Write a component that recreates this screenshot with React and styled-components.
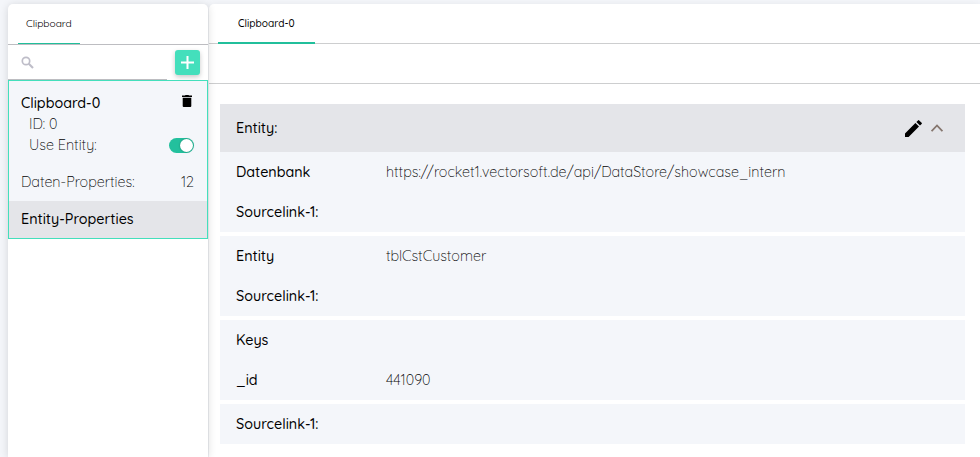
import React from 'react';
import styled, { createGlobalStyle } from 'styled-components';

const GlobalStyle = createGlobalStyle`
  *, *::before, *::after { box-sizing: border-box; }
  body {
    margin: 0;
    background: #f4f6fa;
    font-family: Quicksand, Lato, sans-serif;
    font-size: 14.4px;
    color: #000;
    overflow: hidden;
  }
`;

const Page = styled.div`
  display: flex;
  gap: 1px;
  height: 457px;
  padding: 4px 0 0 8px;
`;

const Panel = styled.section`
  display: flex;
  flex-direction: column;
  background: #fff;
  border-radius: 5px 5px 0 0;
`;

const Sidebar = styled(Panel)`
  flex: 0 0 200px;
  position: relative;
  z-index: 1;
  box-shadow: 0 1px 8px rgba(0, 0, 0, 0.14);
`;

const Main = styled(Panel)`
  flex: 1;
  min-width: 0;
  border-top-right-radius: 0;
  box-shadow: 0 1px 8px rgba(0, 0, 0, 0.08);
`;

const Text = styled.span`
  font-size: ${(p) => (p.$strong ? 14.3 : 14.35)}px;
  font-weight: ${(p) => (p.$strong ? 500 : 300)};
  color: #000;
  line-height: 20px;
  white-space: nowrap;
`;

const TabLabel = styled.span`
  display: block;
  font-size: 10.2px;
  font-weight: ${(p) => (p.$active ? 500 : 400)};
  line-height: 20px;
  color: #000;
  white-space: nowrap;
`;

const SidebarTabs = styled.nav`
  display: flex;
  height: 41px;
  padding-left: 10px;
  border-bottom: 1px solid #bdbdc1;
`;

const SidebarTab = styled.div`
  width: 62px;
  height: 40px;
  padding: 10px 8px 0;
  border-bottom: 1px solid #21bf9b;
`;

const SearchRow = styled.div`
  display: flex;
  height: 35px;
`;

const SearchField = styled.div`
  display: flex;
  align-items: center;
  width: 159px;
  padding-left: 13px;
  border-bottom: 1px solid #bdbdc1;
`;

const AddButton = styled.button`
  display: grid;
  place-items: center;
  width: 25px;
  height: 25px;
  margin: 5px 0 0 8px;
  padding: 0;
  border: 0;
  border-radius: 3px;
  background: #44dfbc;
  box-shadow: 0 2px 5px rgba(0, 0, 0, 0.22);
`;

const Card = styled.article`
  height: 159px;
  border: 1px solid #44dfbc;
  background: #f4f6fa;
`;

const CardBody = styled.div`
  display: flex;
  flex-direction: column;
  height: 120px;
  padding: 11px 13px 0 12px;
`;

const CardRow = styled.div`
  display: flex;
  align-items: center;
  justify-content: space-between;
  height: 21px;
  padding-left: ${(p) => (p.$indent ? 8 : 0)}px;
  margin-top: ${(p) => p.$gap || 0}px;
`;

const TrashIcon = styled.svg`
  margin: -3px 2px 0 0;
`;

const Switch = styled.span`
  display: flex;
  justify-content: flex-end;
  width: 25px;
  height: 15px;
  margin-top: 2px;
  padding: 1px;
  border-radius: 8px;
  background: #23c09d;
`;

const Knob = styled.span`
  width: 13px;
  height: 13px;
  border-radius: 50%;
  background: #fff;
  box-shadow: 0 0 2px rgba(0, 0, 0, 0.35);
`;

const CardFooter = styled.div`
  display: flex;
  align-items: center;
  height: 37px;
  padding: 0 12px 2px;
  background: #e4e5e9;
`;

const MainTabs = styled.nav`
  display: flex;
  height: 40px;
  padding-left: 9px;
  border-bottom: 1px solid #cdcecf;
`;

const MainTab = styled.div`
  width: 97px;
  height: 40px;
  padding: 10px 20px 0;
  border-bottom: 2px solid #21bf9b;
`;

const Toolbar = styled.div`
  height: 40px;
  border-bottom: 1px solid #cdcecf;
`;

const Content = styled.div`
  display: flex;
  flex-direction: column;
  gap: 4px;
  padding: 20px 15px 0 11px;
`;

const Group = styled.div`
  background: #f4f6fa;
`;

const GroupHeader = styled.header`
  display: flex;
  align-items: center;
  height: 48px;
  padding: 0 22px 0 16px;
  background: #e4e5e9;
`;

const HeaderActions = styled.div`
  display: flex;
  align-items: center;
  gap: 9px;
  margin-left: auto;
`;

const Property = styled.div`
  display: grid;
  grid-template-columns: 150px 1fr;
  align-items: center;
  height: 40px;
  padding: 0 16px;
`;

const groups = [
  {
    header: true,
    rows: [
      { label: 'Datenbank', value: 'https://rocket1.vectorsoft.de/api/DataStore/showcase_intern' },
      { label: 'Sourcelink-1:' },
    ],
  },
  { rows: [{ label: 'Entity', value: 'tblCstCustomer' }, { label: 'Sourcelink-1:' }] },
  { rows: [{ label: 'Keys' }, { label: '_id', value: '441090' }] },
  { rows: [{ label: 'Sourcelink-1:' }] },
];

export default function App() {
  return (
    <>
      <GlobalStyle />
      <Page>
        <Sidebar>
          <SidebarTabs>
            <SidebarTab><TabLabel>Clipboard</TabLabel></SidebarTab>
          </SidebarTabs>
          <SearchRow>
            <SearchField>
              <svg width="13" height="13" viewBox="0 0 13 13" fill="none" stroke="#bebdc8">
                <circle cx="5" cy="5" r="3.7" strokeWidth="1.7" />
                <path d="M7.8 7.8L12 12" strokeWidth="2.1" />
              </svg>
            </SearchField>
            <AddButton aria-label="Add">
              <svg width="13" height="13" viewBox="0 0 13 13" fill="none" stroke="#fff" strokeWidth="2">
                <path d="M6.5 0V13M0 6.5H13" />
              </svg>
            </AddButton>
          </SearchRow>
          <Card>
            <CardBody>
              <CardRow>
                <Text $strong>Clipboard-0</Text>
                <TrashIcon width="10" height="12" viewBox="0 0 10 12">
                  <path d="M0 .6H3L3.5 0H6.5L7 .6H10V2H0ZM.7 2.7H9.3V11Q9.3 12 8.3 12H1.7Q.7 12 .7 11Z" />
                </TrashIcon>
              </CardRow>
              <CardRow $indent><Text>ID: 0</Text></CardRow>
              <CardRow $indent>
                <Text>Use Entity:</Text>
                <Switch><Knob /></Switch>
              </CardRow>
              <CardRow $gap={16}>
                <Text>Daten-Properties:</Text>
                <Text>12</Text>
              </CardRow>
            </CardBody>
            <CardFooter><Text $strong>Entity-Properties</Text></CardFooter>
          </Card>
        </Sidebar>
        <Main>
          <MainTabs>
            <MainTab><TabLabel $active>Clipboard-0</TabLabel></MainTab>
          </MainTabs>
          <Toolbar />
          <Content>
            {groups.map((group, i) => (
              <Group key={i}>
                {group.header && (
                  <GroupHeader>
                    <Text $strong>Entity:</Text>
                    <HeaderActions>
                      <svg width="17" height="17" viewBox="0 0 17 17">
                        <path d="M0 13.4L10.4 3L14 6.6L3.6 17H0ZM11.4 2L13 .4Q13.6-.2 14.2.4L16.6 2.8Q17.2 3.4 16.6 4L15 5.6Z" />
                      </svg>
                      <svg width="12" height="8" viewBox="0 0 12 8" fill="none" stroke="#85766e" strokeWidth="1.8">
                        <path d="M.6 7.2L6 1.5L11.4 7.2" />
                      </svg>
                    </HeaderActions>
                  </GroupHeader>
                )}
                {group.rows.map((row, j) => (
                  <Property key={j}>
                    <Text $strong>{row.label}</Text>
                    {row.value && <Text>{row.value}</Text>}
                  </Property>
                ))}
              </Group>
            ))}
          </Content>
        </Main>
      </Page>
    </>
  );
}
